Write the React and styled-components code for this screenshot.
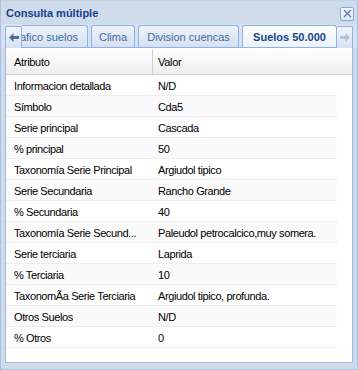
import * as React from "react"
import styled, { createGlobalStyle } from "styled-components"

// Styles
const GlobalStyle = createGlobalStyle`
  html, body {
    margin: 0;
    padding: 0;
    background: #ffffff;
  }
  body {
    font-family: "Liberation Sans", Arial, sans-serif;
    font-size: 11px;
  }
`

const Window = styled.div`
  width: 358px;
  height: 370px;
  box-sizing: border-box;
  display: flex;
  flex-direction: column;
  background: #cfdbea;
  border: 1px solid #a9c0de;
  border-top-color: #c3d3e8;
  overflow: hidden;
`

const TitleBar = styled.div`
  height: 23px;
  flex: none;
  display: flex;
  align-items: center;
  justify-content: space-between;
  padding: 0 3px 0 5px;
`

const Title = styled.span`
  font-weight: bold;
  font-size: 11px;
  color: #15428b;
`

const CloseButton = styled.div`
  width: 12px;
  height: 12px;
  margin-top: 2px;
  border: 1px solid #8aa8cf;
  border-radius: 2px;
  background: linear-gradient(#f6f9fd, #dce7f5);
  display: flex;
  align-items: center;
  justify-content: center;
`

const TabBar = styled.div`
  height: 24px;
  flex: none;
  display: flex;
  align-items: flex-end;
  padding: 0 4px;
  background: #d6e2f1;
`

const Scroller = styled.div`
  width: 17px;
  height: 22px;
  flex: none;
  box-sizing: border-box;
  border: 1px solid #8db2e3;
  border-bottom: none;
  border-radius: 2px 2px 0 0;
  background: linear-gradient(#f2f6fc, #d6e2f3);
  display: flex;
  align-items: center;
  justify-content: center;
`

const TabsViewport = styled.div`
  flex: 1;
  overflow: hidden;
  height: 23px;
  display: flex;
  align-items: flex-end;
  border-bottom: 1px solid #8db2e3;
`

const TabRow = styled.div`
  display: flex;
  align-items: flex-end;
  gap: 3px;
  margin-left: -24px;
  flex: none;
`

const Tab = styled.div`
  width: ${p => p.w}px;
  height: ${p => (p.active ? 23 : 22)}px;
  box-sizing: border-box;
  flex: none;
  display: flex;
  align-items: center;
  justify-content: ${p => (p.right ? "flex-end" : "center")};
  padding-right: ${p => (p.right ? 9 : 0)}px;
  border: 1px solid #8db2e3;
  border-bottom: none;
  border-radius: 3px 3px 0 0;
  margin-bottom: ${p => (p.active ? -1 : 0)}px;
  background: ${p =>
    p.active
      ? "linear-gradient(#ffffff, #eaf1fb)"
      : "linear-gradient(#eef3fa, #d5e1f1)"};
  color: ${p => (p.active ? "#15428b" : "#416aa3")};
  font-weight: ${p => (p.active ? "bold" : "normal")};
  white-space: nowrap;
  position: relative;
  z-index: ${p => (p.active ? 1 : 0)};
`

const Body = styled.div`
  flex: 1;
  margin: 0 4px 6px 4px;
  background: #ffffff;
  border: 1px solid #99bbe8;
  border-top: none;
  display: flex;
  flex-direction: column;
  overflow: hidden;
`

const HeaderRow = styled.div`
  height: 25px;
  flex: none;
  display: flex;
  margin-top: 1px;
  background: linear-gradient(#ffffff, #eeeeee);
  border-bottom: 1px solid #d0d0d0;
`

const HeaderCell = styled.div`
  width: ${p => p.w}px;
  box-sizing: border-box;
  display: flex;
  align-items: center;
  padding-left: ${p => p.pad}px;
  padding-top: 1px;
  color: #000000;
  letter-spacing: -0.3px;
  border-right: ${p => (p.sep ? "1px solid #d0d0d0" : "none")};
`

const Row = styled.div`
  width: 331px;
  height: 21px;
  box-sizing: border-box;
  flex: none;
  display: flex;
  background: ${p => (p.alt ? "#fafafa" : "#ffffff")};
  border-bottom: 1px solid #ededed;
`

const Cell = styled.div`
  width: ${p => p.w}px;
  box-sizing: border-box;
  padding-left: ${p => p.pad}px;
  padding-right: 3px;
  padding-top: 1px;
  line-height: 20px;
  color: #000000;
  letter-spacing: -0.4px;
  white-space: nowrap;
  overflow: hidden;
`

// Data
const tabs = [
  { label: "Grafico suelos", w: 90, right: true },
  { label: "Clima", w: 44 },
  { label: "Division cuencas", w: 101 },
  { label: "Suelos 50.000", w: 95, active: true }
]

const rows = [
  ["Informacion detallada", "N/D"],
  ["Símbolo", "Cda5"],
  ["Serie principal", "Cascada"],
  ["% principal", "50"],
  ["Taxonomía Serie Principal", "Argiudol tipico"],
  ["Serie Secundaria", "Rancho Grande"],
  ["% Secundaria", "40"],
  ["Taxonomía Serie Secund...", "Paleudol petrocalcico,muy somera."],
  ["Serie terciaria", "Laprida"],
  ["% Terciaria", "10"],
  ["TaxonomÃa Serie Terciaria", "Argiudol tipico, profunda."],
  ["Otros Suelos", "N/D"],
  ["% Otros", "0"]
]

const Arrow = ({ dir, color }) => (
  <svg width="10" height="9" viewBox="0 0 10 9">
    <path
      d={dir === "left" ? "M0 4.5 L4.5 0 L4.5 3 L10 3 L10 6 L4.5 6 L4.5 9 Z" : "M10 4.5 L5.5 0 L5.5 3 L0 3 L0 6 L5.5 6 L5.5 9 Z"}
      fill={color}
    />
  </svg>
)

// Markup
const App = () => {
  return (
    <Window>
      <GlobalStyle />
      <TitleBar>
        <Title>Consulta múltiple</Title>
        <CloseButton>
          <svg width="9" height="9" viewBox="0 0 9 9">
            <path d="M1 1 L8 8 M8 1 L1 8" stroke="#5a7fb3" strokeWidth="1.4" />
          </svg>
        </CloseButton>
      </TitleBar>
      <TabBar>
        <Scroller>
          <Arrow dir="left" color="#4c6f9e" />
        </Scroller>
        <TabsViewport>
          <TabRow>
            {tabs.map((tab, index) => (
              <Tab key={index} w={tab.w} active={tab.active} right={tab.right}>
                {tab.label}
              </Tab>
            ))}
          </TabRow>
        </TabsViewport>
        <Scroller>
          <Arrow dir="right" color="#b3c4da" />
        </Scroller>
      </TabBar>
      <Body>
        <HeaderRow>
          <HeaderCell w={147} pad={8} sep>Atributo</HeaderCell>
          <HeaderCell w={184} pad={5}>Valor</HeaderCell>
        </HeaderRow>
        {rows.map((row, index) => (
          <Row key={index} alt={index % 2 === 1}>
            <Cell w={147} pad={8}>{row[0]}</Cell>
            <Cell w={184} pad={5}>{row[1]}</Cell>
          </Row>
        ))}
      </Body>
    </Window>
  )
}

export default App
